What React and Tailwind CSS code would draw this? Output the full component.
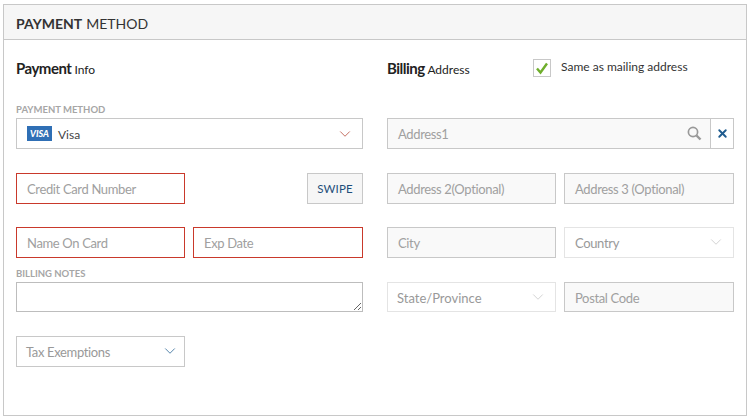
import { X, ChevronDown } from 'lucide-react'

const font = { fontFamily: 'Lato, sans-serif' }

function Field({ label, error, filled = true, height = 'h-[31px]', className = '' }) {
  const border = error ? 'border-[#c9392b]' : 'border-[#c8c8c8]'
  const bg = filled && !error ? 'bg-[#f9f9f9]' : 'bg-white'
  return (
    <div className={`${height} flex items-center pl-[10px] pt-[3px] border ${border} ${bg} text-[13px] tracking-[-0.35px] text-[#a0a0a0] ${className}`}>
      {label}
    </div>
  )
}

function Select({ label, faded, height = 'h-[31px]', className = '', pad = 'pr-[8px]', text = 'tracking-[-0.35px]' }) {
  return (
    <div
      className={`${height} flex items-center justify-between pl-[9px] ${pad} pt-[3px] border ${
        faded ? 'border-[#e4e4e4] text-[#999]' : 'border-[#c8c8c8] text-[#999]'
      } bg-white text-[13px] ${text} ${className}`}
    >
      {label}
      <ChevronDown size={18} strokeWidth={1} className={`-mt-[4px] ${faded ? 'text-[#c4c4c4]' : 'text-[#1f5c8f]'}`} />
    </div>
  )
}

function Heading({ bold, light }) {
  return (
    <h2 className="text-[#222] text-[12px] leading-[20px] -mt-[1px]">
      <span className="text-[15px] font-bold tracking-[-0.5px]">{bold}</span> {light}
    </h2>
  )
}

export default function App() {
  return (
    <div style={font} className="w-[753px] h-[419px] bg-white pt-[4px] pl-[3px]">
      <section className="w-[744px] h-[412px] border border-[#c8c8c8]">
        <header className="h-[35px] bg-[#f6f6f6] border-b border-[#c8c8c8] flex items-center pl-[12px] pt-[3px] text-[14px] text-[#333]">
          <span className="font-bold mr-[4px]">PAYMENT</span> METHOD
        </header>

        <div className="flex gap-[24px] pl-[12px] pt-[19px]">
          {/* colonne paiement */}
          <div className="w-[347px] flex flex-col">
            <Heading bold="Payment" light="Info" />
            <label className="mt-[23px] h-[14px] text-[9.5px] leading-[14px] font-bold text-[#a6a6a6]">PAYMENT METHOD</label>
            <div className="mt-[1px] h-[31px] flex items-center justify-between pl-[10px] pr-[8px] border border-[#c8c8c8] text-[12px] text-[#444]">
              <span className="flex items-center gap-[6px]">
                <span className="w-[25px] h-[15px] flex items-center justify-center bg-[#2f6fb5] text-white text-[9px] font-black italic">VISA</span>
                <span className="pt-[2px]">Visa</span>
              </span>
              <ChevronDown size={18} strokeWidth={1} className="text-[#b0402f]" />
            </div>

            <div className="mt-[24px] flex justify-between">
              <Field label="Credit Card Number" error className="w-[169px]" />
              <button className="w-[56px] h-[31px] border border-[#c8c8c8] bg-[#f6f6f6] text-[11.5px] text-[#1f4f7a] tracking-[0.1px]">SWIPE</button>
            </div>

            <div className="mt-[23px] flex gap-[8px]">
              <Field label="Name On Card" error className="w-[169px]" />
              <Field label="Exp Date" error className="flex-1" />
            </div>

            <label className="mt-[9px] h-[14px] text-[9.5px] leading-[14px] font-bold text-[#a6a6a6]">BILLING NOTES</label>
            <textarea className="mt-[1px] w-full h-[30px] border border-[#bdbdbd] block outline-none" />

            <Select label="Tax Exemptions" className="w-[169px] mt-[24px]" pad="pr-[5px]" />
          </div>

          {/* colonne adresse */}
          <div className="w-[347px] flex flex-col">
            <div className="flex items-center h-[20px]">
              <div className="w-[146px]">
                <Heading bold="Billing" light="Address" />
              </div>
              <span className="w-[18px] h-[18px] border border-[#c8c8c8] flex items-center justify-center -mt-[2px]">
                <svg width="14" height="14" viewBox="0 0 14 14" fill="none" stroke="#6fae2c" strokeWidth="2.4">
                  <path d="M2 7.5 L5.5 11.5 L12 2.5" />
                </svg>
              </span>
              <span className="ml-[10px] text-[12px] text-[#333] -mt-[4px]">Same as mailing address</span>
            </div>

            <div className="mt-[39px] flex">
              <div className="flex-1 h-[31px] flex items-center justify-between pl-[10px] pr-[8px] pt-[3px] border border-[#c8c8c8] bg-[#f9f9f9] text-[13px] tracking-[-0.35px] text-[#a0a0a0]">
                Address1
                <svg width="15" height="15" viewBox="0 0 15 15" fill="none" stroke="#999" className="-mt-[3px]">
                  <circle cx="6" cy="6" r="4.6" strokeWidth="1.7" />
                  <path d="M9.5 9.5 L13.5 13.5" strokeWidth="2.4" />
                </svg>
              </div>
              <div className="w-[23px] h-[31px] flex items-center justify-center border border-l-0 border-[#c8c8c8]">
                <X size={13} strokeWidth={3.5} className="text-[#1f5c8f]" />
              </div>
            </div>

            <div className="mt-[24px] grid grid-cols-[169px_170px] gap-x-[8px] gap-y-[23px]">
              <Field label="Address 2(Optional)" />
              <Field label="Address 3 (Optional)" />
              <Field label="City" />
              <Select label="Country" faded className="pl-[10px]" />
              <Select label="State/Province" faded height="h-[30px]" text="tracking-[0px]" className="mt-[1px]" />
              <Field label="Postal Code" height="h-[30px]" className="mt-[1px]" />
            </div>
          </div>
        </div>
      </section>
    </div>
  )
}
